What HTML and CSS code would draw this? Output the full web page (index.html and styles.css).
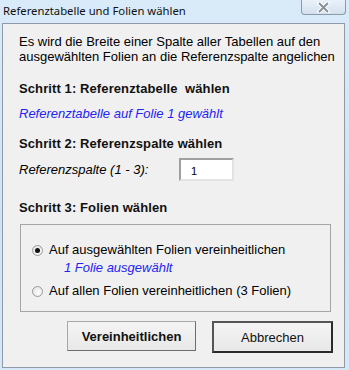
FILE: index.html
```html
<!DOCTYPE html>
<html lang="de">
<head>
    <meta charset="UTF-8">
    <title>Referenztabelle und Folien wählen</title>
    <link rel="stylesheet" href="styles.css">
</head>
<body>
    <div class="window">
        <div class="titlebar">
            <span class="title">Referenztabelle und Folien wählen</span>
            <button class="close-btn">
                <svg width="13" height="11" viewBox="0 0 13 11">
                    <path d="M2 1 L11 10 M11 1 L2 10" stroke="#fff" stroke-width="4" stroke-linecap="square"/>
                    <path d="M2 1 L11 10 M11 1 L2 10" stroke="#8a9097" stroke-width="2"/>
                </svg>
            </button>
        </div>
        <div class="client">
            <p class="intro">Es wird die Breite einer Spalte aller Tabellen auf den ausgewählten Folien an die Referenzspalte angelichen</p>

            <h3 class="step">Schritt 1: Referenztabelle&nbsp; wählen</h3>
            <p class="info">Referenztabelle auf Folie 1 gewählt</p>

            <h3 class="step">Schritt 2: Referenzspalte wählen</h3>
            <div class="field-row">
                <label class="field-label" for="col-input">Referenzspalte (1 - 3):</label>
                <input class="field-input" id="col-input" type="text" value="1">
            </div>

            <h3 class="step step-3">Schritt 3: Folien wählen</h3>
            <div class="group">
                <label class="radio-row">
                    <span class="radio checked"></span>
                    <span>Auf ausgewählten Folien vereinheitlichen</span>
                </label>
                <p class="info sub">1 Folie ausgewählt</p>
                <label class="radio-row">
                    <span class="radio"></span>
                    <span>Auf allen Folien vereinheitlichen (3 Folien)</span>
                </label>
            </div>

            <div class="buttons">
                <button class="btn btn-bold">Vereinheitlichen</button>
                <button class="btn btn-default">Abbrechen</button>
            </div>
        </div>
    </div>
</body>
</html>
```

FILE: styles.css
```css
body, html {
    margin: 0;
    height: 100%;
    font-family: "Liberation Sans", Arial, sans-serif;
}
.window {
    width: 349px;
    height: 370px;
    box-sizing: border-box;
    padding: 0 4px 2px 2px;
    background: linear-gradient(to bottom, #d9ebf9, #cfe3f4 60%, #d6e8f7);
    display: flex;
    flex-direction: column;
}
.titlebar {
    height: 23px;
    display: flex;
    justify-content: space-between;
    align-items: flex-start;
}
.title {
    font-family: "Noto Sans", "Open Sans", sans-serif;
    font-size: 11.3px;
    color: #111;
    padding: 3px 0 0 1px;
    line-height: 16px;
}
.close-btn {
    width: 45px;
    height: 15px;
    margin-right: -1px;
    padding: 0;
    border: 1px solid #8d99a6;
    border-top: none;
    border-radius: 0 0 4px 4px;
    background: linear-gradient(to bottom, #e9f1f9, #d3e1ee);
    display: flex;
    align-items: center;
    justify-content: center;
}
.client {
    flex: 1;
    background-color: #f0f0f0;
    border: 1px solid #8f9aa6;
    padding: 10px 2px 0 16px;
    font-size: 13px;
    color: #000;
}
.intro {
    margin: 0 0 17px;
    line-height: 15px;
}
.step {
    margin: 0;
    font-size: 13px;
    font-weight: bold;
    color: #111;
    line-height: 16px;
    letter-spacing: 0.1px;
}
.info {
    margin: 9px 0 14px;
    font-style: italic;
    color: #2323f5;
    line-height: 16px;
}
.field-row {
    display: flex;
    align-items: flex-start;
    margin-top: 7px;
}
.field-label {
    font-style: italic;
    width: 160px;
    line-height: 16px;
    padding-top: 3px;
}
.field-input {
    width: 55px;
    height: 23px;
    box-sizing: border-box;
    margin-top: -1px;
    border: 2px solid #a0a0a0;
    border-right-color: #e3e3e3;
    border-bottom-color: #e3e3e3;
    padding: 3px 10px 0;
    font-family: inherit;
    font-size: 11px;
    background: #fff;
}
.step-3 {
    margin-top: 19px;
}
.group {
    margin: 8px 0 0 1px;
    width: 311px;
    height: 88px;
    box-sizing: border-box;
    border: 1px solid #a5a5a5;
    padding: 17px 0 0 11px;
}
.radio-row {
    display: flex;
    align-items: center;
    gap: 6px;
    line-height: 16px;
}
.radio {
    width: 9px;
    height: 9px;
    border-radius: 50%;
    border: 1px solid #9a9a9a;
    background: radial-gradient(circle at 60% 60%, #fff, #dcdcdc);
    position: relative;
}
.radio.checked::after {
    content: "";
    position: absolute;
    left: 2px;
    top: 2px;
    width: 5px;
    height: 5px;
    border-radius: 50%;
    background: #111;
}
.sub {
    margin: 2px 0 7px 32px;
}
.buttons {
    display: flex;
    gap: 16px;
    margin: 9px 0 0 48px;
}
.btn {
    height: 30px;
    font-family: inherit;
    font-size: 13px;
    color: #111;
    background: linear-gradient(to bottom, #f4f4f4, #e8e8e8);
    border: 1px solid #a8a8a8;
    border-right-color: #6d6d6d;
    border-bottom-color: #6d6d6d;
    padding: 0;
}
.btn-bold {
    width: 129px;
    font-weight: bold;
}
.btn-default {
    width: 121px;
    height: 32px;
    border: 2px solid #2b2b2b;
    border-left-color: #555;
    border-top-color: #555;
}
```
